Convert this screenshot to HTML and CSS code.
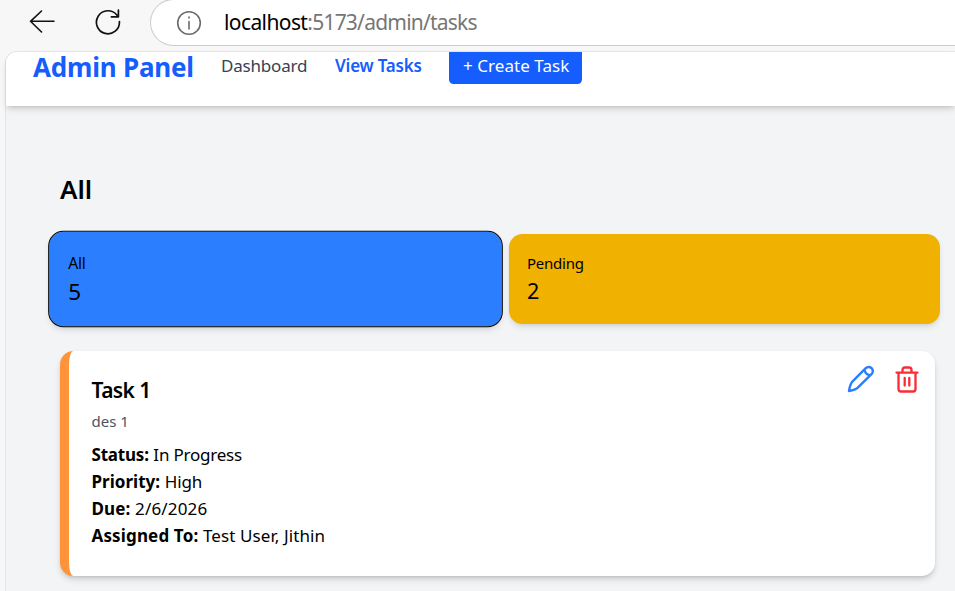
FILE: index.html
```html
<!DOCTYPE html>
<html lang="en">
<head>
<meta charset="utf-8">
<title>Admin tasks</title>
<link rel="stylesheet" href="styles.css">
</head>
<body>
<header class="toolbar">
  <svg class="back" width="26" height="24" viewBox="0 0 26 24"><path d="M25 11.3H1.5M12.5 1 1.5 11.3l11 10.7"/></svg>
  <svg class="reload" width="26" height="26" viewBox="0 0 26 26"><path d="M24.4 12.5A11.5 11.5 0 1 1 22 6.2M23.4 1v6.8h-7"/></svg>
  <div class="address">
    <svg width="26" height="26" viewBox="0 0 26 26"><circle cx="13" cy="13" r="11.3"/><path d="M13 11.5V19M13 7v1"/></svg>
    <div class="url"><span class="host">localhost</span><span class="path">:5173/admin/tasks</span></div>
  </div>
</header>
<div class="page">
  <nav class="nav">
    <div class="brand">Admin Panel</div>
    <a class="link">Dashboard</a>
    <a class="link active">View Tasks</a>
    <a class="create">+ Create Task</a>
  </nav>
  <main class="content">
    <h1>All</h1>
    <div class="stats">
      <div class="stat stat-all"><div class="label">All</div><div class="count">5</div></div>
      <div class="stat stat-pending"><div class="label">Pending</div><div class="count">2</div></div>
    </div>
    <article class="task">
      <div class="details">
        <h2>Task 1</h2>
        <p class="desc">des 1</p>
        <p><strong class="k-status">Status:</strong> <span class="v-status">In Progress</span></p>
        <p><strong class="k-priority">Priority:</strong> <span class="v-priority">High</span></p>
        <p><strong>Due:</strong> <span>2/6/2026</span></p>
        <p><strong>Assigned To:</strong> <span class="v-assigned">Test User, Jithin</span></p>
      </div>
      <div class="actions">
        <svg class="edit" width="28" height="28" viewBox="0 0 28 28"><path d="M18.500 3.300Q21.700.8 24.700 3.200Q27.100 6.200 24.500 9.200L10.500 22.800Q8.500 24.700 2 26Q3.100 19.300 4.900 17.200ZM17.500 5q1.200 4.600 5.300 5.200"/></svg>
        <svg class="trash" width="24" height="27" viewBox="0 0 24 27"><path d="M1.500 6.600h21M7.500 6.500V4q0-2.500 2.500-2.500h4q2.500 0 2.500 2.500v2.500M3.500 7v16q0 2.500 2.500 2.500h12q2.500 0 2.500-2.500V7M9.700 12v7.500M14.300 12v7.500"/></svg>
      </div>
    </article>
  </main>
</div>
</body>
</html>
```
FILE: styles.css
```css
* { box-sizing: border-box; }
body {
  margin: 0;
  width: 955px;
  height: 591px;
  overflow: hidden;
  background: #f7f7f7;
  color: #000;
  font: 17px/27px "Noto Sans", "Open Sans", sans-serif;
}
h1, h2, p { margin: 0; }
svg { fill: none; flex: none; stroke-linecap: round; stroke-linejoin: round; }
.toolbar { display: flex; height: 51px; padding-left: 29px; }
.back { margin-top: 10px; stroke: #111; stroke-width: 1.6; }
.reload { margin: 9px 0 0 40px; stroke: #111; stroke-width: 1.7; }
.address {
  display: flex;
  align-items: center;
  flex: 1;
  height: 47px;
  margin: -1px 0 0 29px;
  padding-left: 25px;
  background: #fff;
  border: 1.5px solid #ccc;
  border-right: 0;
  border-radius: 24px 0 0 24px;
}
.address svg { stroke: #6b6b6b; stroke-width: 1.6; }
.url { margin-left: 22px; font-size: 21px; white-space: nowrap; }
.host { letter-spacing: -0.6px; }
.path { color: #767676; letter-spacing: -0.78px; }
.page {
  height: 540px;
  margin-left: 5px;
  background: #f3f4f6;
  border: 1px solid #e5e5e5;
  border-width: 1px 0 0 1px;
  border-radius: 12px 0 0 0;
}
.nav {
  display: flex;
  align-items: flex-start;
  gap: 27px;
  height: 54px;
  padding-left: 27px;
  background: #fff;
  border-radius: 11px 0 0 0;
  box-shadow: 0 4px 7px -1px rgb(0 0 0 / .14), 0 2px 4px -2px rgb(0 0 0 / .14);
  white-space: nowrap;
}
.brand { width: 161px; font-size: 26px; line-height: 31px; font-weight: 700; letter-spacing: -0.2px; color: #155dfc; }
.link { width: 87px; color: #364153; letter-spacing: -0.2px; }
.active { color: #155dfc; font-weight: 600; letter-spacing: -0.2px; }
.create { width: 133px; height: 32px; padding-left: 14px; background: #155dfc; color: #fff; border-radius: 0 0 4.5px 4.5px; letter-spacing: 0.05px; }
.content { padding: 65px 0 0 54px; }
h1 { font-size: 26px; font-weight: 600; line-height: 36px; }
.stats { display: grid; grid-template-columns: 431px 431px; gap: 18px; margin-top: 27px; }
.stat { height: 90px; padding: 18px; border-radius: 13.5px; box-shadow: 0 4px 7px -1px rgb(0 0 0 / .1), 0 2px 4px -2px rgb(0 0 0 / .1); }
.stat-all { background: #2b7fff; outline: 1.1px solid #000; transform: scale(1.05); }
.stat-pending { background: #f0b100; }
.label { font-size: 15px; line-height: 22.5px; letter-spacing: -0.25px; }
.count { font-size: 21.5px; line-height: 31.5px; }
.task {
  display: flex;
  justify-content: space-between;
  width: 875px;
  height: 225px;
  margin-top: 27px;
  padding: 23px 16px 0 22.5px;
  background: #fff;
  border-left: 9px solid #ff9339;
  border-radius: 13.5px;
  box-shadow: 0 4px 7px -1px rgb(0 0 0 / .16), 0 2px 4px -2px rgb(0 0 0 / .16);
}
h2 { font-size: 21px; font-weight: 600; line-height: 33px; letter-spacing: -0.6px; }
p { white-space: pre; letter-spacing: 0.15px; }
.desc { margin: 3px 0 8px; font-size: 15px; line-height: 22.5px; letter-spacing: 0; color: #4a5565; }
.k-status { letter-spacing: -0.2px; }
.k-priority { letter-spacing: 0.02px; }
.v-status { letter-spacing: -0.22px; }
.v-priority { letter-spacing: -0.1px; }
.v-assigned { letter-spacing: 0.1px; }
.actions { display: flex; gap: 20px; margin-top: -9px; }
.edit { stroke: #2b7fff; stroke-width: 2.4; }
.trash { margin-top: 0.5px; stroke: #fb2c36; stroke-width: 2.3; }
```
